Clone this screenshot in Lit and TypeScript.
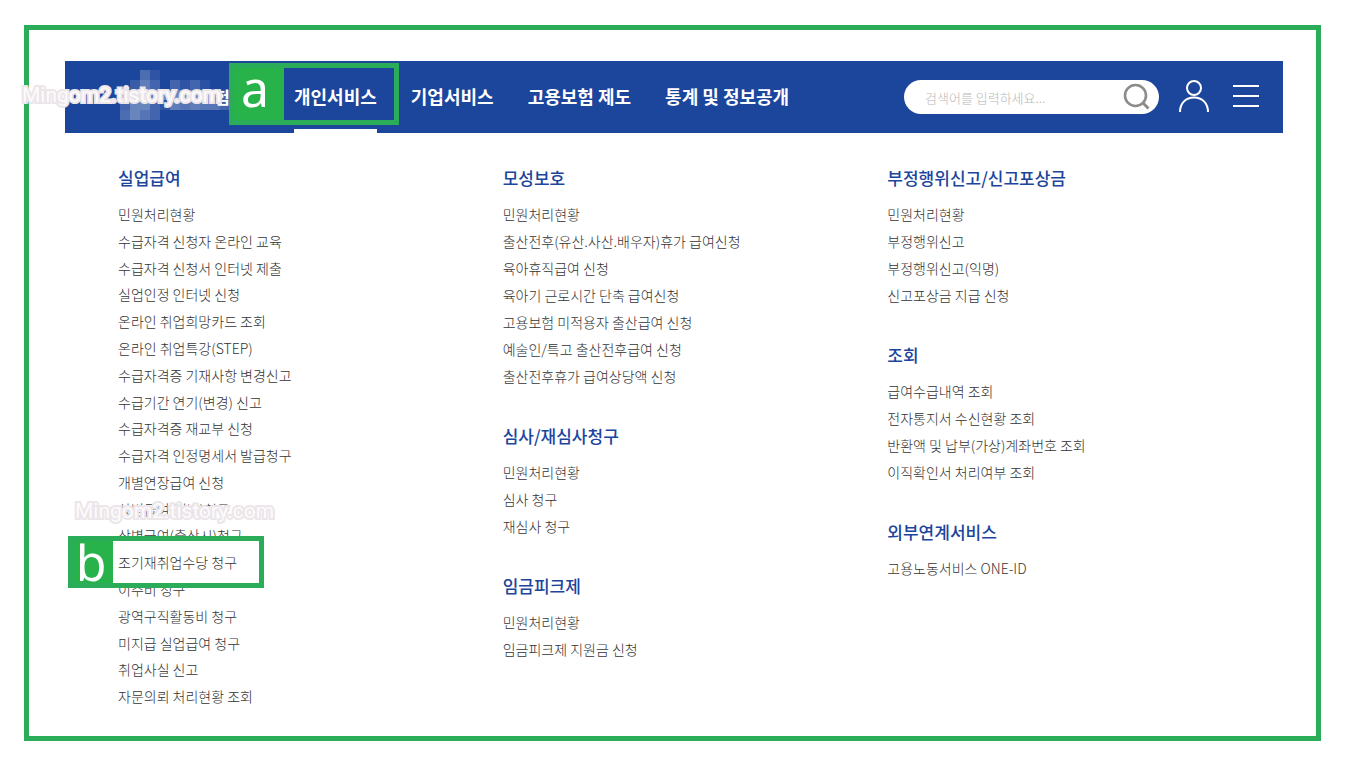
import { LitElement, html, css, svg } from "lit";
import { customElement, state } from "lit/decorators.js";

interface MenuGroup {
  title: string;
  items: string[];
}

const NAV = ["개인서비스", "기업서비스", "고용보험 제도", "통계 및 정보공개"];
const MARKED = "조기재취업수당 청구";
const STAMPED = "상병급여(질병)청구";

const COLUMNS: MenuGroup[][] = [
  [
    {
      title: "실업급여",
      items: [
        "민원처리현황",
        "수급자격 신청자 온라인 교육",
        "수급자격 신청서 인터넷 제출",
        "실업인정 인터넷 신청",
        "온라인 취업희망카드 조회",
        "온라인 취업특강(STEP)",
        "수급자격증 기재사항 변경신고",
        "수급기간 연기(변경) 신고",
        "수급자격증 재교부 신청",
        "수급자격 인정명세서 발급청구",
        "개별연장급여 신청",
        STAMPED,
        "상병급여(출산시)청구",
        MARKED,
        "이주비 청구",
        "광역구직활동비 청구",
        "미지급 실업급여 청구",
        "취업사실 신고",
        "자문의뢰 처리현황 조회",
      ],
    },
  ],
  [
    {
      title: "모성보호",
      items: [
        "민원처리현황",
        "출산전후(유산.사산.배우자)휴가 급여신청",
        "육아휴직급여 신청",
        "육아기 근로시간 단축 급여신청",
        "고용보험 미적용자 출산급여 신청",
        "예술인/특고 출산전후급여 신청",
        "출산전후휴가 급여상당액 신청",
      ],
    },
    { title: "심사/재심사청구", items: ["민원처리현황", "심사 청구", "재심사 청구"] },
    { title: "임금피크제", items: ["민원처리현황", "임금피크제 지원금 신청"] },
  ],
  [
    {
      title: "부정행위신고/신고포상금",
      items: ["민원처리현황", "부정행위신고", "부정행위신고(익명)", "신고포상금 지급 신청"],
    },
    {
      title: "조회",
      items: [
        "급여수급내역 조회",
        "전자통지서 수신현황 조회",
        "반환액 및 납부(가상)계좌번호 조회",
        "이직확인서 처리여부 조회",
      ],
    },
    { title: "외부연계서비스", items: ["고용노동서비스 ONE-ID"] },
  ],
];

// Pixelated tiles that hide the site logo: [column, row, opacity]
const MOSAIC: [number, number, number][] = [
  [2, 0, 0.25], [3, 0, 0.1],
  [1, 1, 0.15], [2, 1, 0.35], [3, 1, 0.2], [5, 1, 0.2], [6, 1, 0.1], [7, 1, 0.2], [8, 1, 0.08],
  [0, 2, 0.2], [1, 2, 0.4], [2, 2, 0.5], [3, 2, 0.3], [4, 2, 0.4], [5, 2, 0.4], [6, 2, 0.4], [7, 2, 0.4], [8, 2, 0.4], [9, 2, 0.2], [10, 2, 0.2],
  [0, 3, 0.2], [1, 3, 0.4], [2, 3, 0.4], [3, 3, 0.2], [4, 3, 0.1], [5, 3, 0.35], [6, 3, 0.3], [7, 3, 0.35], [8, 3, 0.3], [9, 3, 0.3], [10, 3, 0.2],
  [0, 4, 0.25], [1, 4, 0.4], [2, 4, 0.3], [3, 4, 0.2],
];

@customElement("app-root")
export class AppRoot extends LitElement {
  @state() private active = 0;

  static styles = css`
    :host {
      display: block;
      font-family: "Noto Sans CJK KR", "Noto Sans", sans-serif;
      --blue: #1c459c;
      --green: #2bac58;
    }
    * {
      box-sizing: border-box;
    }
    ul {
      list-style: none;
      margin: 0;
      padding: 0;
    }
    a {
      color: inherit;
      text-decoration: none;
    }
    button {
      border: 0;
      padding: 0;
      background: none;
      cursor: pointer;
      display: block;
    }
    svg {
      display: block;
    }
    .page {
      min-height: 100vh;
      padding: 25px 32px 32px 24px;
      background: #fff;
      display: flex;
    }
    .frame {
      flex: 1;
      border: 5px solid var(--green);
      padding: 31px 33px 26px 36px;
      display: flex;
      flex-direction: column;
    }
    .bar {
      position: relative;
      height: 72px;
      background: var(--blue);
      color: #fff;
      display: flex;
      align-items: stretch;
      padding-right: 24px;
    }
    .brand {
      flex: 0 0 229px;
      position: relative;
      overflow: hidden;
    }
    .mosaic {
      position: absolute;
      left: 55px;
      top: 9px;
    }
    .brand-name {
      position: absolute;
      right: 64px;
      top: 24px;
      font-size: 17px;
      line-height: 24px;
      font-weight: 700;
    }
    nav {
      display: flex;
    }
    .nav {
      display: flex;
      gap: 34px;
    }
    .nav li {
      position: relative;
      display: flex;
    }
    .nav a {
      position: relative;
      display: flex;
      align-items: center;
      font-size: 18px;
      font-weight: 700;
      white-space: nowrap;
      border-bottom: 4px solid transparent;
      padding-top: 2px;
    }
    .nav a.on {
      border-bottom-color: #fff;
    }
    .tools {
      margin-left: auto;
      display: flex;
      align-items: center;
      gap: 20px;
    }
    .search {
      width: 255px;
      height: 34px;
      border-radius: 17px;
      background: #fff;
      display: flex;
      align-items: center;
      padding: 0 9px 0 21px;
    }
    .search input {
      flex: 1;
      min-width: 0;
      border: 0;
      outline: 0;
      padding: 0;
      background: none;
      font: 300 13px "Noto Sans CJK KR", sans-serif;
      color: #333;
    }
    .search input::placeholder {
      color: #b8b8b8;
      opacity: 1;
    }
    .menu-button {
      margin-left: 4px;
    }
    .panel {
      flex: 1;
      display: grid;
      grid-template-columns: repeat(3, 1fr);
      padding: 32px 11px 0 53px;
    }
    .column {
      display: flex;
      flex-direction: column;
      gap: 33px;
    }
    .group.fill {
      flex: 1;
      display: flex;
      flex-direction: column;
    }
    .group.fill ul {
      flex: 1;
      display: grid;
      grid-auto-rows: 1fr;
    }
    h2 {
      margin: 0 0 10px;
      font-size: 17px;
      line-height: 26px;
      font-weight: 500;
      color: var(--blue);
    }
    .group li {
      position: relative;
      font-size: 14px;
      line-height: 26px;
      font-weight: 300;
      color: #333;
      white-space: nowrap;
    }
    .group:not(.fill) li {
      line-height: 27px;
    }
    .group li.marked {
      z-index: 1;
    }
    .group li a {
      position: relative;
    }
    .callout {
      position: absolute;
      display: flex;
      align-items: center;
      border: 5px solid var(--green);
      color: #fff;
      font-family: "Noto Sans", sans-serif;
    }
    .callout b {
      align-self: stretch;
      display: flex;
      align-items: center;
      justify-content: center;
      background: #27b24a;
      font-weight: 400;
      font-size: 50px;
      line-height: 42px;
    }
    .callout-a {
      left: -65px;
      top: 2px;
      width: 170px;
      height: 62px;
    }
    .callout-a b {
      width: 50px;
      padding: 0 8px 12px 0;
    }
    .callout-b {
      left: -50px;
      top: -13px;
      width: 196px;
      height: 52px;
      background: #fff;
    }
    .callout-b b {
      width: 40px;
      padding-right: 4px;
    }
    .stamp {
      position: absolute;
      z-index: 2;
      font-family: Roboto, sans-serif;
      font-size: 21px;
      line-height: 26px;
      font-weight: 400;
      color: rgba(255, 255, 255, 0.9);
      -webkit-text-stroke: 4px #ece5e9;
      paint-order: stroke fill;
      white-space: nowrap;
      pointer-events: none;
    }
    .stamp-top {
      left: -43px;
      top: 21px;
    }
    .stamp-list {
      left: -43px;
      top: 2px;
    }
  `;

  private renderItem(text: string) {
    const marked = text === MARKED;
    return html`<li class=${marked ? "marked" : ""}>
      ${marked ? html`<span class="callout callout-b"><b>b</b></span>` : ""}
      <a href="#">${text}</a>
      ${text === STAMPED
        ? html`<span class="stamp stamp-list">Mingom2.tistory.com</span>`
        : ""}
    </li>`;
  }

  render() {
    return html`
      <div class="page">
        <main class="frame">
          <header class="bar">
            <div class="brand">
              <svg class="mosaic" width="110" height="50" aria-hidden="true">
                ${MOSAIC.map(
                  ([x, y, o]) => svg`<rect x=${x * 10} y=${y * 10} width="10" height="10" fill="#dfe6f3" opacity=${o} />`
                )}
              </svg>
              <span class="brand-name">험</span>
            </div>
            <nav>
              <ul class="nav">
                ${NAV.map(
                  (label, i) => html`<li>
                    ${i === 0 ? html`<span class="callout callout-a"><b>a</b></span>` : ""}
                    <a href="#" class=${this.active === i ? "on" : ""} @mouseenter=${() => (this.active = i)}>${label}</a>
                  </li>`
                )}
              </ul>
            </nav>
            <div class="tools">
              <form class="search" @submit=${(e: Event) => e.preventDefault()}>
                <input type="text" aria-label="검색어" placeholder="검색어를 입력하세요..." />
                <button type="submit" aria-label="검색">
                  <svg width="28" height="28" viewBox="0 0 28 28" fill="none" stroke="#8f8b8b">
                    <circle cx="13.500" cy="12.500" r="10.500" stroke-width="2.600" />
                    <path d="M21 20L26.500 25.500" stroke-width="3" />
                  </svg>
                </button>
              </form>
              <button type="button" aria-label="마이페이지">
                <svg width="30" height="34" viewBox="0 0 30 34" fill="none" stroke="#fff" stroke-width="2">
                  <circle cx="15" cy="8" r="7" />
                  <path d="M1 32C1 23 7 17.500 15 17.500S29 23 29 32" />
                </svg>
              </button>
              <button class="menu-button" type="button" aria-label="전체메뉴">
                <svg width="26" height="24" viewBox="0 0 26 24" stroke="#fff" stroke-width="2">
                  <path d="M0 1H26M0 11H26M0 21H26" />
                </svg>
              </button>
            </div>
            <span class="stamp stamp-top">Mingom2.tistory.com</span>
          </header>
          <div class="panel">
            ${COLUMNS.map(
              (groups) => html`<div class="column">
                ${groups.map(
                  (g) => html`<section class="group ${groups.length === 1 ? "fill" : ""}">
                    <h2>${g.title}</h2>
                    <ul>
                      ${g.items.map((t) => this.renderItem(t))}
                    </ul>
                  </section>`
                )}
              </div>`
            )}
          </div>
        </main>
      </div>
    `;
  }
}
